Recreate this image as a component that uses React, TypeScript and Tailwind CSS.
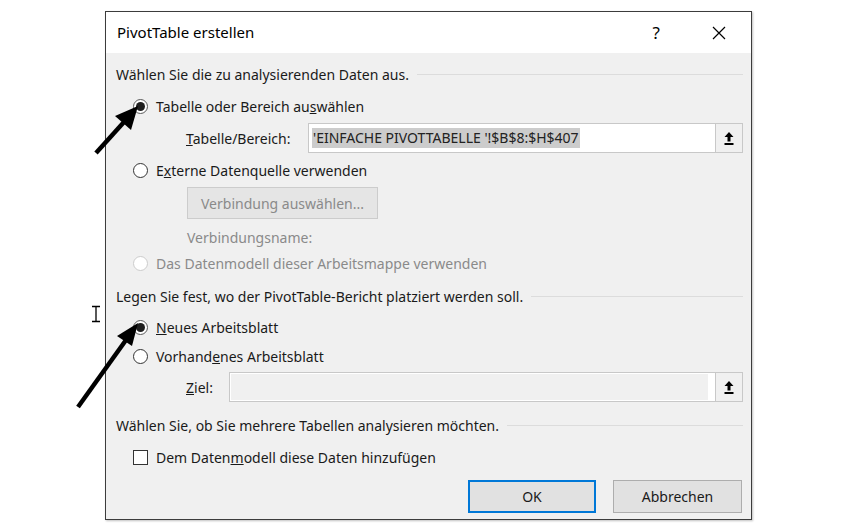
import React from "react";

const font = { fontFamily: '"Noto Sans", "Open Sans", sans-serif' };

function Radio({ checked = false, disabled = false }: { checked?: boolean; disabled?: boolean }) {
  return (
    <span
      className={`flex h-[15px] w-[15px] shrink-0 items-center justify-center rounded-full border bg-white ${
        disabled ? "border-[#cccccc]" : checked ? "border-[#5a5a5a]" : "border-[#333333]"
      }`}
    >
      {checked && <span className="h-[9px] w-[9px] rounded-full bg-[#1f1f1f]" />}
    </span>
  );
}

function UploadIcon() {
  return (
    <svg width="12" height="15" viewBox="0 0 12 15">
      <path d="M6 1 L1.5 6 H4.5 V10.5 H7.5 V6 H10.5 Z" fill="#000" />
      <rect x="1.5" y="12" width="9" height="2" fill="#000" />
    </svg>
  );
}

function SectionLabel({ children }: { children: React.ReactNode }) {
  return (
    <div className="flex h-[20px] items-center gap-[8px]">
      <span className="whitespace-nowrap">{children}</span>
      <span className="h-px flex-1 bg-[#dcdcdc]" />
    </div>
  );
}

export default function App() {
  return (
    <div className="relative h-[532px] w-[863px] overflow-hidden bg-white text-[14px] text-[#1a1a1a]" style={font}>
      <div className="pl-[105px] pt-[11px]">
        <div className="flex h-[509px] w-[647px] flex-col border border-[#3c3c3c] bg-[#f0f0f0] shadow-[1px_1px_2px_rgba(0,0,0,0.25)]">
          {/* Title bar */}
          <div className="flex h-[41px] items-center bg-white pl-[11px]">
            <span className="flex-1 text-[15px] text-[#000]">PivotTable erstellen</span>
            <span className="mr-[52px] text-[17px] text-[#000]">?</span>
            <svg width="14" height="14" viewBox="0 0 14 14" className="mr-[25px]">
              <path d="M1 1 L13 13 M13 1 L1 13" stroke="#000" strokeWidth="1.2" />
            </svg>
          </div>

          {/* Body */}
          <div className="flex flex-col pl-[10px] pr-[8px]">
            <div className="mt-[11px]">
              <SectionLabel>Wählen Sie die zu analysierenden Daten aus.</SectionLabel>
            </div>

            <div className="mt-[12px] flex h-[20px] items-center gap-[8px] pl-[17px]">
              <Radio checked />
              <span>
                Tabelle oder Bereich au<u>s</u>wählen
              </span>
            </div>

            <div className="mt-[7px] flex h-[30px] items-center pl-[70px]">
              <span className="w-[122px]">
                <u>T</u>abelle/Bereich:
              </span>
              <div className="flex h-[30px] flex-1 items-center border border-[#c8c8c8] bg-white">
                <span className="ml-[3px] bg-[#cccccc] px-[1px] text-[14px] leading-[20px] text-[#222]">
                  'EINFACHE PIVOTTABELLE '!$B$8:$H$407
                </span>
                <span className="flex-1" />
                <span className="flex h-[28px] w-[27px] items-center justify-center border-l border-[#c8c8c8] bg-[#f0f0f0]">
                  <UploadIcon />
                </span>
              </div>
            </div>

            <div className="mt-[7px] flex h-[20px] items-center gap-[8px] pl-[17px]">
              <Radio />
              <span>
                E<u>x</u>terne Datenquelle verwenden
              </span>
            </div>

            <div className="mt-[7px] pl-[71px]">
              <div className="flex h-[32px] w-[191px] items-center justify-center border border-[#cccccc] bg-[#e5e5e5] text-[#8a8a8a]">
                Verbindung auswählen...
              </div>
            </div>

            <div className="mt-[8px] flex h-[20px] items-center pl-[71px] text-[#8a8a8a]">Verbindungsname:</div>

            <div className="mt-[6px] flex h-[20px] items-center gap-[8px] pl-[17px] text-[#8a8a8a]">
              <Radio disabled />
              <span>Das Datenmodell dieser Arbeitsmappe verwenden</span>
            </div>

            <div className="mt-[13px]">
              <SectionLabel>Legen Sie fest, wo der PivotTable-Bericht platziert werden soll.</SectionLabel>
            </div>

            <div className="mt-[11px] flex h-[20px] items-center gap-[8px] pl-[17px]">
              <Radio checked />
              <span>
                <u>N</u>eues Arbeitsblatt
              </span>
            </div>

            <div className="mt-[9px] flex h-[20px] items-center gap-[8px] pl-[17px]">
              <Radio />
              <span>
                Vorhand<u>e</u>nes Arbeitsblatt
              </span>
            </div>

            <div className="mt-[6px] flex h-[30px] items-center pl-[70px]">
              <span className="w-[43px]">
                <u>Z</u>iel:
              </span>
              <div className="flex h-[30px] flex-1 items-center border border-[#c8c8c8] bg-white">
                <span className="mx-[1px] h-[26px] flex-1 bg-[#f0f0f0]" />
                <span className="w-[6px]" />
                <span className="flex h-[28px] w-[27px] items-center justify-center border-l border-[#c8c8c8] bg-[#f0f0f0]">
                  <UploadIcon />
                </span>
              </div>
            </div>

            <div className="mt-[13px]">
              <SectionLabel>Wählen Sie, ob Sie mehrere Tabellen analysieren möchten.</SectionLabel>
            </div>

            <div className="mt-[12px] flex h-[20px] items-center gap-[8px] pl-[17px]">
              <span className="h-[15px] w-[15px] shrink-0 border border-[#333333] bg-white" />
              <span>
                Dem Daten<u>m</u>odell diese Daten hinzufügen
              </span>
            </div>

            <div className="mt-[13px] flex justify-end gap-[17px] pr-[1px]">
              <div className="flex h-[33px] w-[128px] items-center justify-center border-2 border-[#0078d7] bg-[#e1e1e1]">
                OK
              </div>
              <div className="flex h-[33px] w-[129px] items-center justify-center border border-[#adadad] bg-[#e1e1e1]">
                Abbrechen
              </div>
            </div>
          </div>
        </div>
      </div>

      {/* Overlays: annotation arrows and cursor */}
      <svg className="pointer-events-none absolute left-0 top-0" width="863" height="532" viewBox="0 0 863 532">
        <line x1="96" y1="153" x2="124" y2="122" stroke="#000" strokeWidth="4.5" />
        <polygon points="138,106 131,130 115,116" fill="#000" />
        <line x1="78" y1="407" x2="126" y2="340" stroke="#000" strokeWidth="4.5" />
        <polygon points="138,323 132,346 117,336" fill="#000" />
        <path d="M92 306.5 H100 M96 306.5 V321.5 M92 321.5 H100" stroke="#000" strokeWidth="1.3" fill="none" />
      </svg>
    </div>
  );
}
